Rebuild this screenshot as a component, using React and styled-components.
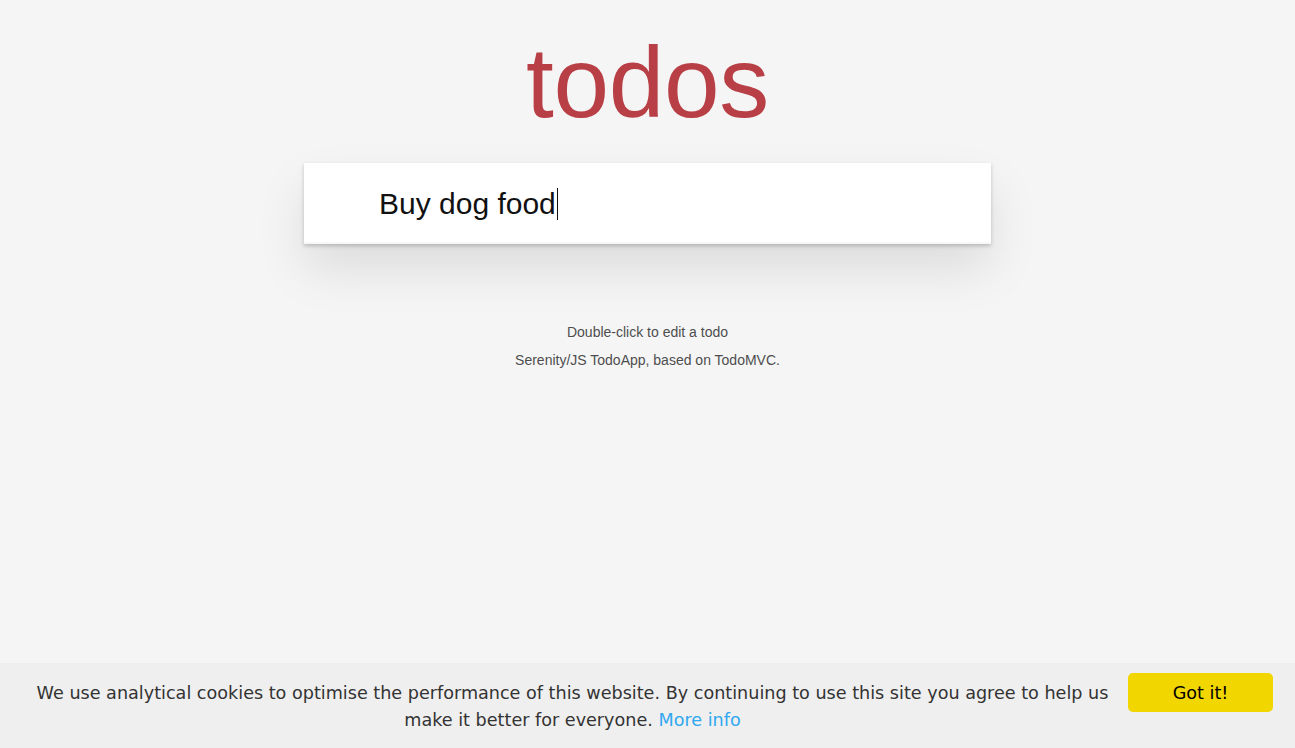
import React from 'react';
import styled, { createGlobalStyle } from 'styled-components';

const GlobalStyle = createGlobalStyle`
  html, body {
    margin: 0;
    padding: 0;
  }
  body {
    background: #f5f5f5;
    font-family: "Liberation Sans", Arial, sans-serif;
    color: #111;
    min-height: 748px;
  }
`;

const Page = styled.div`
  min-height: 748px;
  display: flex;
  flex-direction: column;
`;

const TodoApp = styled.section`
  width: 687px;
  margin: 0 auto;
  padding-top: 32px;
`;

const Title = styled.h1`
  margin: 0 0 31px;
  font-size: 100px;
  line-height: 100px;
  font-weight: 400;
  text-align: center;
  color: #b83f45;
  letter-spacing: -0.3px;
`;

const NewTodo = styled.div`
  height: 81px;
  box-sizing: border-box;
  padding-left: 75px;
  display: flex;
  align-items: center;
  background: #fff;
  font-size: 30px;
  color: #111;
  box-shadow: inset 0 -2px 1px rgba(0, 0, 0, 0.03),
    0 2px 4px 0 rgba(0, 0, 0, 0.2),
    0 25px 50px 0 rgba(0, 0, 0, 0.1);
`;

const Caret = styled.span`
  display: inline-block;
  width: 1px;
  height: 32px;
  margin-left: 1px;
  background: #111;
  vertical-align: middle;
`;

const Info = styled.footer`
  margin: 67px auto 0;
  color: #4d4d4d;
  font-size: 14px;
  text-align: center;
  text-shadow: 0 1px 0 rgba(255, 255, 255, 0.5);

  p {
    line-height: 1;
    margin: 14px 0 13px;
  }
`;

const CookieBar = styled.div`
  margin-top: auto;
  display: flex;
  align-items: flex-start;
  padding: 10px 22px 14px 18px;
  background: #efefef;
  font-family: "DejaVu Sans", sans-serif;
  font-size: 17.6px;
  line-height: 27px;
  color: #333;
`;

const Message = styled.p`
  flex: 1;
  margin: 0;
  padding-top: 7px;
  text-align: center;
`;

const MoreInfo = styled.a`
  color: #31a8f0;
  text-decoration: none;
`;

const GotIt = styled.button`
  width: 145px;
  height: 39px;
  margin-left: 1px;
  border: none;
  border-radius: 5px;
  background: #f1d600;
  color: #000;
  font-family: "DejaVu Sans", sans-serif;
  font-size: 17.6px;
  cursor: pointer;
`;

const App = () => {
  return (
    <Page>
      <GlobalStyle />
      <TodoApp>
        <Title>todos</Title>
        <NewTodo>
          Buy dog food<Caret />
        </NewTodo>
      </TodoApp>
      <Info>
        <p>Double-click to edit a todo</p>
        <p>Serenity/JS TodoApp, based on TodoMVC.</p>
      </Info>
      <CookieBar>
        <Message>
          We use analytical cookies to optimise the performance of this website. By continuing to use this site you agree to help us make it better for everyone.{' '}
          <MoreInfo href="#">More info</MoreInfo>
        </Message>
        <GotIt>Got it!</GotIt>
      </CookieBar>
    </Page>
  );
};

export default App;
